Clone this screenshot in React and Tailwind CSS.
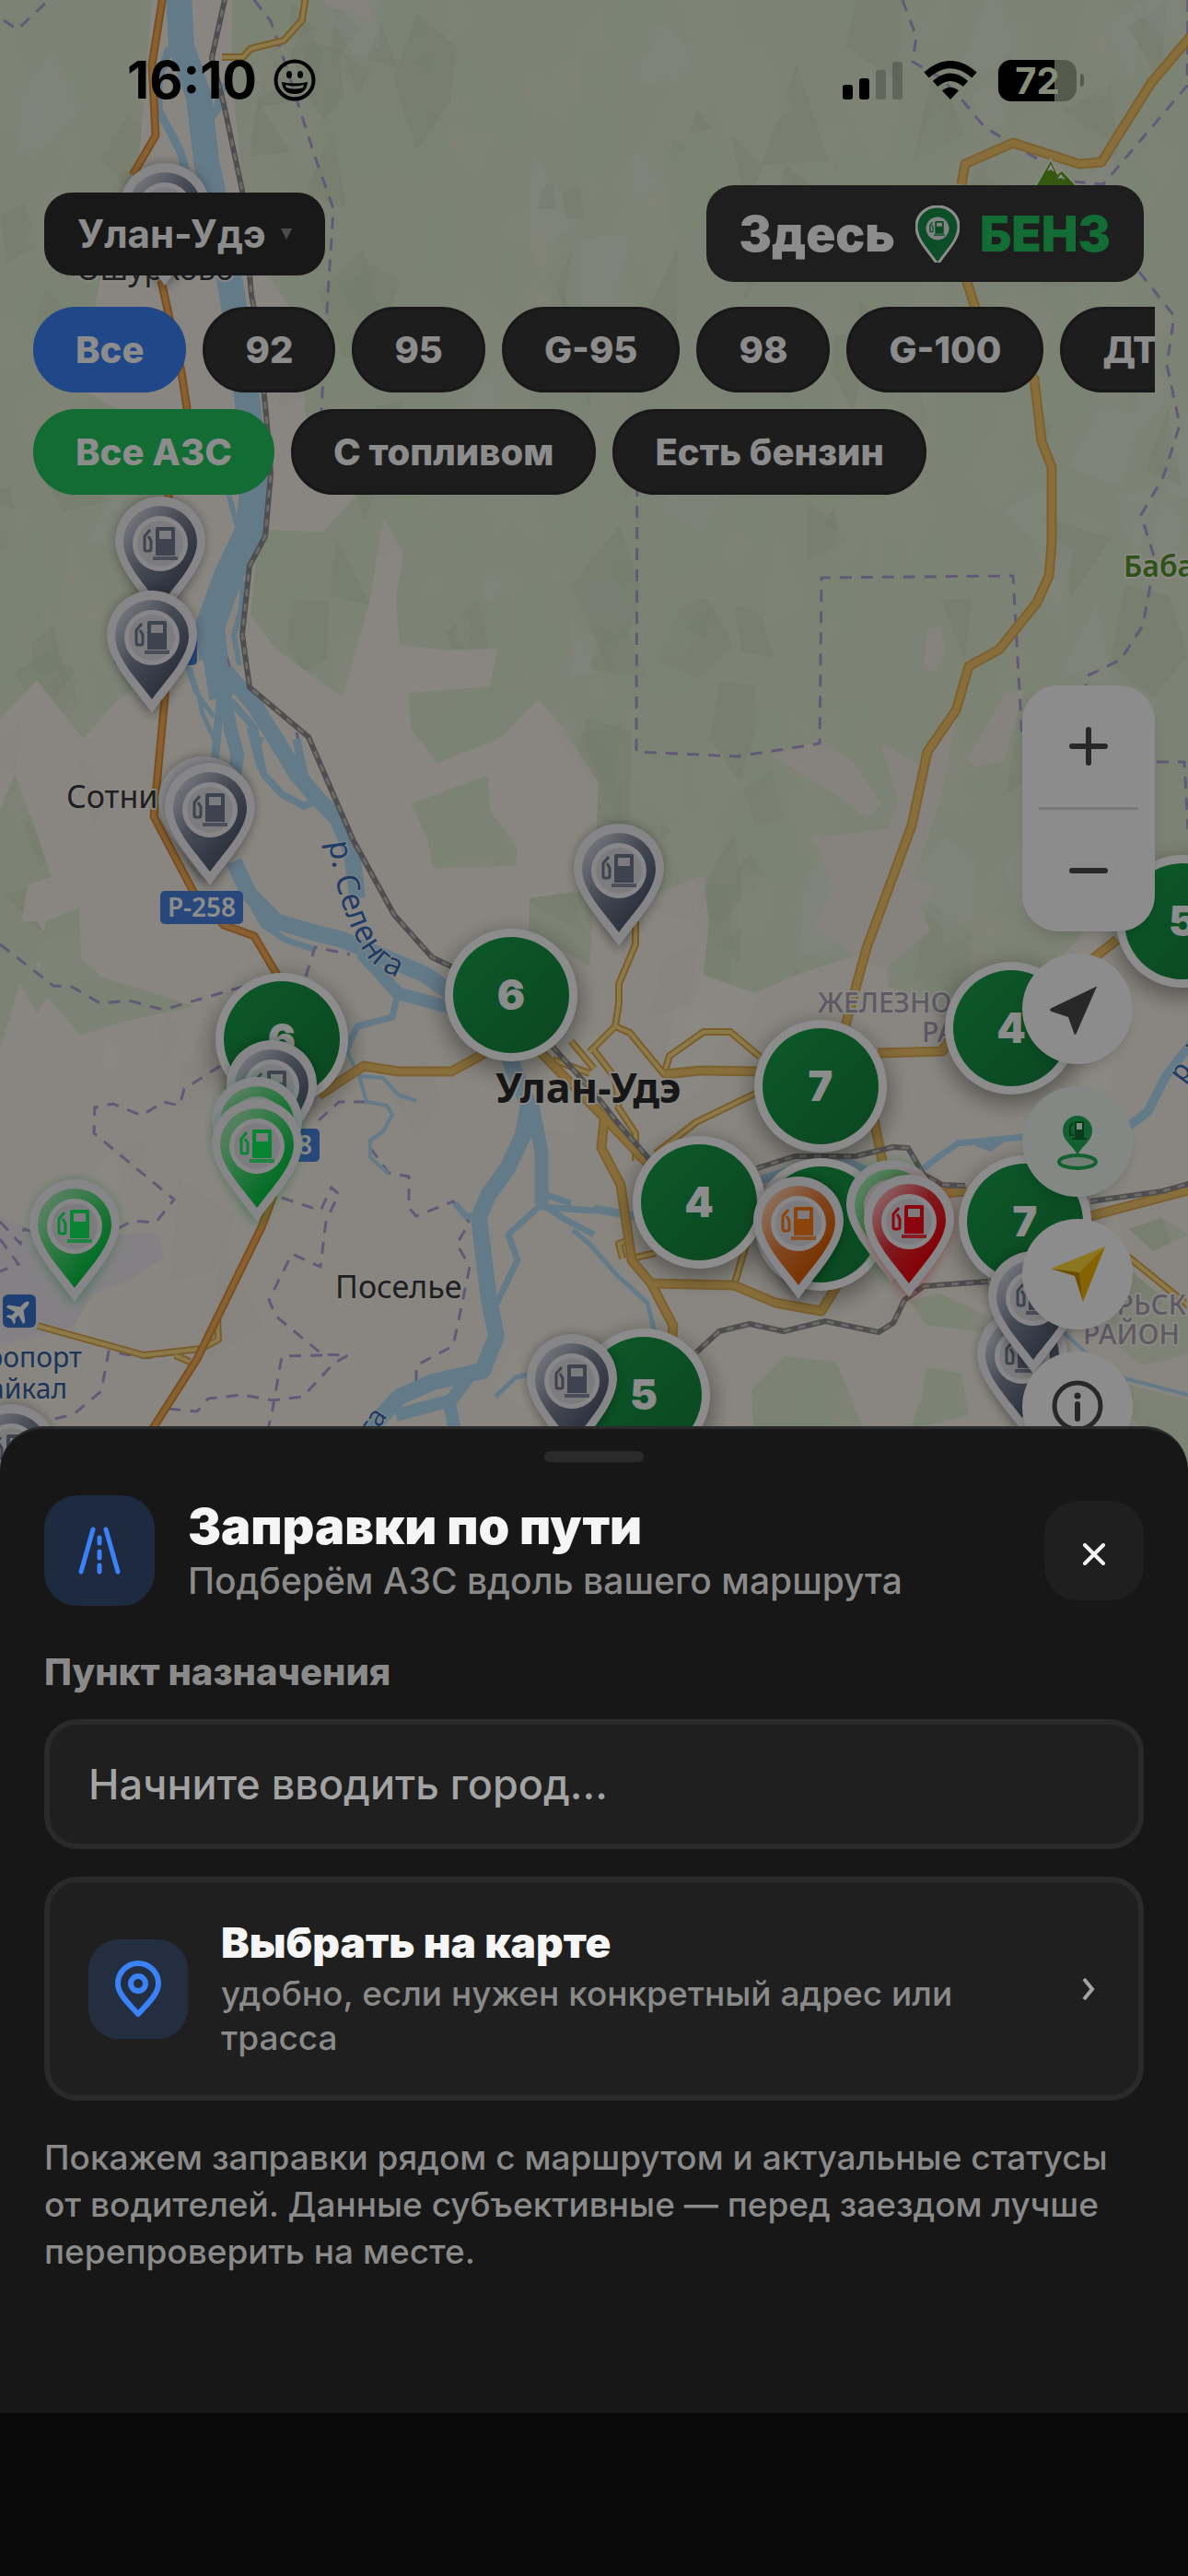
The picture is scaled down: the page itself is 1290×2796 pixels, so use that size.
import React, { useState } from 'react';

// seeded random, so the relief looks the same on every render
const makeRandom = (seed) => () => {
  seed = (seed * 16807) % 2147483647;
  return seed / 2147483647;
};

const makeFacets = (count, seed, minSize, maxSize) => {
  const rnd = makeRandom(seed);
  const facets = [];
  for (let i = 0; i < count; i++) {
    const cx = rnd() * 1290;
    const cy = rnd() * 1600;
    const size = minSize + rnd() * (maxSize - minSize);
    const corners = 3 + Math.floor(rnd() * 3);
    const start = rnd() * 6;
    const points = [];
    for (let j = 0; j < corners; j++) {
      const a = start + (j * 6.28) / corners;
      const r = size * (0.4 + rnd() * 0.8);
      points.push(`${Math.round(cx + Math.cos(a) * r * 0.6)},${Math.round(cy + Math.sin(a) * r)}`);
    }
    facets.push({ points: points.join(' '), tone: rnd() });
  }
  return facets;
};

const forestFacets = makeFacets(800, 4211, 18, 82);
const landFacets = makeFacets(90, 977, 25, 80);

const forests = [
  "0,0 165,0 158,90 150,180 118,262 84,420 176,470 176,540 150,620 158,738 120,768 90,802 40,738 0,780",
  "252,0 1290,0 1290,985 1262,1005 1180,1008 1128,1066 1110,1072 1080,1066 1050,1120 965,1070 958,1030 920,1040 870,1056 820,1078 764,1058 770,1000 764,950 700,975 645,960 650,850 612,790 584,760 545,800 475,828 446,792 444,752 532,745 540,704 480,706 434,700 430,650 438,600 416,560 402,650 372,757 300,705 272,668 282,575 350,577 385,540 378,480 334,470 322,345 292,300 262,190 252,80",
  "0,880 16,840 40,905 56,952 30,960 20,1025 58,1072 40,1100 0,1030",
  "50,1000 86,985 88,1040 110,1060 210,1092 130,1110 88,1124 40,1070",
  "446,872 530,842 532,880 562,920 560,940 470,942 464,910",
  "575,975 645,965 640,1048 608,1030 574,1016",
  "0,1000 40,1000 60,1030 24,1060 0,1140",
  "852,1472 908,1478 938,1552 818,1552 816,1508",
  "988,1412 1020,1404 1072,1428 1068,1446 1006,1438",
  "1006,1484 1044,1490 1052,1536 988,1552 1000,1520",
  "1226,1334 1262,1322 1290,1340 1252,1358",
  "1226,1378 1290,1430 1290,1470 1240,1482 1200,1450",
  "1180,1490 1290,1520 1290,1600 1230,1600 1240,1550",
];

const clearings = [
  "352,0 400,0 406,26 380,12 356,8",
  "1006,684 1020,680 1026,705 1016,728 1004,726",
  "838,820 890,805 925,825 956,872 942,888 904,860",
  "956,806 998,830 1008,820 1030,790 1040,772 1020,870 990,960 1010,1010 960,1052 930,1040 884,1004 912,950 880,908 930,904 964,900 976,870",
  "1092,752 1112,750 1090,826 1058,832 1050,824",
  "884,906 902,915 916,945 962,946 1015,960 1010,975 980,1000 920,1006",
  "310,395 332,430 300,445",
];

const riverParts = [
  { w: 28, d: "M194 -5 L197 50 L216 105 L224 175 L238 240 L252 320 L268 430 L278 520" },
  { w: 32, d: "M278 510 L272 575 L248 625 L228 680 L232 715" },
  { w: 26, d: "M232 705 L240 758" },
  { w: 9, d: "M184 52 L172 85 L172 120 L186 145 L196 165 L203 190" },
  { w: 9, d: "M242 90 L236 118 L222 138" },
  { w: 6, d: "M248 536 L258 572 M264 630 L262 660 L254 690 L260 722" },
  { w: 5, d: "M202 720 L212 750 L232 778 M206 725 L216 756 L220 775 L234 805" },
  { w: 9, d: "M240 750 L236 795 L233 828" },
  { w: 15, d: "M242 745 L250 790 L258 820 L254 842" },
  { w: 18, d: "M244 728 L276 765 L298 800 L322 840 L346 868 L366 888 L382 925 L388 975" },
  { w: 8, d: "M250 760 L276 790 L286 840 L306 862 L330 875 L344 868" },
  { w: 5, d: "M270 790 L282 835 M284 800 L278 820" },
  { w: 9, d: "M322 802 L332 850" },
  { w: 18, d: "M254 935 L270 970 L300 1000 L340 1012 L372 1020 L420 1040 L462 1058 L500 1085" },
  { w: 7, d: "M270 975 L286 1004 L310 1020 L340 1030" },
  { w: 14, d: "M392 1034 L432 1078 L490 1094" },
  { w: 7, d: "M432 1078 L426 1104 L388 1114 L376 1140" },
  { w: 4, d: "M376 1140 L390 1168 L398 1196 L420 1200 L426 1210 L416 1228 L402 1238 L402 1256 L422 1274 M392 1168 L416 1170 L432 1188 L452 1195" },
  { w: 18, d: "M552 1146 L574 1200 L568 1232 L551 1268 L531 1296 L520 1321 L526 1370 L531 1411 L539 1450 L524 1488 L470 1500 L434 1516 L400 1552" },
  { w: 15, d: "M578 1200 L588 1250 L588 1307" },
  { w: 7, d: "M588 1307 L552 1340 L562 1368 L539 1415 M588 1307 L616 1325 L645 1340" },
  { w: 7, d: "M588 1310 L645 1314 M590 1296 L620 1306 M494 1306 L506 1320 L520 1320" },
  { w: 14, d: "M512 1490 L490 1520 L430 1536 M488 1524 L494 1552" },
  { w: 5, d: "M538 1516 L560 1495 L590 1488 M622 1335 L640 1350 L670 1384 L703 1414 L711 1446" },
  { w: 10, d: "M1294 1132 L1266 1168 L1246 1207 L1226 1222" },
  { w: 7, d: "M1112 1234 L1040 1241 L1020 1255 L1003 1268 M1090 1236 L1075 1246 L1060 1241" },
  { w: 9, d: "M822 1282 L875 1264 L912 1257 L940 1270 M645 1312 L690 1320" },
  { w: 4, d: "M1155 1446 L1185 1474 L1221 1496 L1290 1514" },
];

const highways = "M177 -5 L165 70 L169 147 L144 190 M174 300 L197 404 L203 443 L183 536 L181 640 L179 757 L167 886 L210 968 L243 1004 L276 1016 L302 1060 L322 1150 L312 1200 L296 1300 L284 1332 L214 1475 L165 1552";

const mainRoads = "M1294 38 L1250 90 L1196 176 L1172 178 L1100 155 L1048 178 L1044 200 M1048 300 L1061 340 L1123 411 L1131 479 L1142 507 L1142 590 L1139 625 L1126 654 L1085 705 L1052 723 L1038 771 L1007 816 L990 896 L941 1029 L916 1120 M949 1215 L966 1300 L1050 1293 M953 1143 L1023 1141 L1035 1120 M1184 1320 L1294 1291 M346 1189 L395 1157 L432 1163 L490 1163 L527 1143 M721 1166 L760 1162 L830 1163 M585 1140 L657 1214 L715 1275 M657 1206 L653 1246 L674 1286 L686 1368 L707 1393 L797 1395 L842 1414 L892 1423 L912 1390 M707 1393 L731 1439 L728 1470 M1213 1020 L1185 1042";

const smallRoads = "M332 -5 L328 22 L308 44 L272 53 L264 62 L241 62 M690 1000 L690 1025 L672 1068 L672 1089 L668 1114 L640 1142 M668 1114 L684 1121 L721 1166 L727 1146 L764 1120 L793 1120 L825 1147 M822 1186 L756 1218 L712 1252 M645 1140 L668 1170 L672 1200 M620 1130 L645 1160 M600 1150 L640 1165 M670 1200 L690 1230 L690 1260 M797 1395 L812 1345 M686 1366 L712 1360 M686 1345 L672 1350 L676 1366 M41 1439 L156 1471 L218 1464 L237 1454 L236 1430 M190 1471 L206 1478 M1225 1364 L1294 1420 M645 1186 L625 1175";

const rails = "M245 -5 L230 63 L243 113 L263 207 L273 320 L280 357 L290 461 L294 514 L288 582 L271 614 L263 689 L271 746 L335 800 L383 911 L428 993 L469 1039 L492 1050 M600 1136 L645 1186 L670 1218 L710 1264 M822 1268 L863 1255 L929 1255 L970 1245 L986 1246 L1003 1275 L1023 1286 L1048 1287 M1184 1304 L1262 1293 L1294 1284 M1073 1391 L1003 1396 L982 1411 L970 1436 L954 1446 L896 1434 L851 1445 L814 1437 L781 1445 L756 1468";

const borders = "M4 22 L19 32 L53 0 M276 0 L294 23 L309 67 L341 167 L362 227 L356 320 L347 480 M980 0 L995 40 L991 67 L1019 83 L1040 103 L1069 138 L1134 177 M1290 0 L1289 93 L1198 200 L1163 197 M1237 295 L1275 343 L1267 396 L1281 461 L1263 518 L1239 559 L1254 607 L1241 679 L1217 716 L1180 734 L1178 760 M692 480 L691 816 L801 821 L890 807 L892 627 L1100 625 L1110 803 M1256 827 L1286 827 L1290 900 M263 630 L243 655 L239 690 L250 725 M322 795 L335 850 L358 880 M0 1025 L58 1070 L78 1071 L109 1089 L140 1086 L177 1096 L267 1070 M332 1060 L342 1028 L380 1036 M239 1157 L200 1182 L195 1200 L177 1196 L154 1211 L123 1198 L103 1202 L102 1230 L189 1302 L169 1327 L144 1325 L123 1336 M346 1216 L368 1196 L400 1196 M402 1246 L422 1273 L444 1277 L444 1311 L452 1320 L492 1304 L510 1327 L496 1350 L510 1375 L502 1414 L492 1461 L452 1482 L452 1500 M306 1300 L348 1314 L360 1289 L368 1296 L354 1325 L348 1375 L317 1361 L292 1411 L300 1429 L350 1470 L378 1471 L362 1480 L329 1516 L296 1520 L263 1514 L226 1518 L214 1532 L181 1529 M350 1471 L306 1472 L296 1530 L290 1555 M0 1326 L22 1350 L26 1334 L44 1340 M0 1345 L20 1372 L0 1380 M60 1540 L80 1535 L110 1510 L118 1467 L160 1474 L200 1468";

const pinColors = {
  gray: { from: '#d4d6e0', mid: '#7f869a', to: '#525b72', icon: '#737b92', glow: '#000000' },
  green: { from: '#a8ecb8', mid: '#52dc78', to: '#00c440', icon: '#10f25c', glow: '#00a83a' },
  orange: { from: '#ffd0ae', mid: '#ea8240', to: '#dc5c00', icon: '#ff7c18', glow: '#000000' },
  red: { from: '#ffb6b6', mid: '#e8303a', to: '#f00008', icon: '#ff0818', glow: '#d80010' },
};

const pins = [
  { x: 179, y: 309, color: 'gray' },
  { x: 174, y: 671, color: 'gray' },
  { x: 165, y: 773, color: 'gray' },
  { x: 221, y: 953, color: 'gray' },
  { x: 228, y: 960, color: 'gray' },
  { x: 672, y: 1026, color: 'gray' },
  { x: 295, y: 1261, color: 'gray' },
  { x: 279, y: 1301, color: 'green' },
  { x: 279, y: 1325, color: 'green' },
  { x: 81, y: 1412, color: 'green' },
  { x: 867, y: 1409, color: 'orange' },
  { x: 968, y: 1391, color: 'green' },
  { x: 987, y: 1407, color: 'red' },
  { x: 1110, y: 1553, color: 'gray' },
  { x: 1122, y: 1490, color: 'gray' },
  { x: 621, y: 1580, color: 'gray' },
  { x: 12, y: 1656, color: 'gray' },
];

const clusters = [
  { x: 555, y: 1080, count: 6 },
  { x: 306, y: 1128, count: 6 },
  { x: 891, y: 1179, count: 7 },
  { x: 891, y: 1329, count: 5 },
  { x: 759, y: 1305, count: 4 },
  { x: 1098, y: 1116, count: 4 },
  { x: 1113, y: 1326, count: 7 },
  { x: 699, y: 1514, count: 5 },
  { x: 1284, y: 1000, count: 5 },
];

const PumpShape = ({ color }) => (
  <g>
    <path fillRule="evenodd" fill={color} d="M-4 -18 h17 a2 2 0 0 1 2 2 v29 h-21 v-29 a2 2 0 0 1 2 -2 z M-2 -14 h13 v9 h-13 z" />
    <rect x="-9" y="14" width="27" height="4" fill={color} opacity="0.8" />
    <path d="M-12 -15 L-18 -8 V6 a2 2 0 0 0 2 2 h3 a2 2 0 0 0 2 -2 V-3 L-14 -8" fill="none" stroke={color} strokeWidth="3" />
  </g>
);

const Pin = ({ x, y, color }) => {
  const c = pinColors[color];
  return (
    <g transform={`translate(${x} ${y})`}>
      <path d="M0 4 C-18 -22 -46 -54 -46 -84 A46 46 0 0 1 46 -84 C46 -54 18 -22 0 4 Z" fill={c.glow} opacity="0.45" filter="url(#soft)" />
      <path d="M0 1 C-20 -27 -49 -56 -49 -84 A49 48 0 0 1 49 -84 C49 -56 20 -27 0 1 Z" fill="#f4f4f8" />
      <path d="M0 -14 C-18 -38 -40 -60 -40 -83 A40 39 0 0 1 40 -83 C40 -60 18 -38 0 -14 Z" fill={`url(#pin-${color})`} />
      <circle cx="0" cy="-81" r="30" fill="#f6f6f9" />
      <circle cx="0" cy="-81" r="25" fill="#e2e2e6" />
      <g transform="translate(1 -81)">
        <PumpShape color={c.icon} />
      </g>
    </g>
  );
};

const Cluster = ({ x, y, count }) => (
  <g>
    <circle cx={x} cy={y + 8} r="74" fill="#000" opacity="0.38" filter="url(#shade)" />
    <circle cx={x} cy={y} r="72" fill="#fff" />
    <circle cx={x} cy={y} r="63" fill="url(#cluster)" />
    <text x={x} y={y + 16} textAnchor="middle" fontSize="45" fontWeight="900" fill="#fff">{count}</text>
  </g>
);

const RoadBadge = ({ x, y }) => (
  <g>
    <rect x={x} y={y} width="90" height="36" rx="5" fill="#4a84e0" />
    <text x={x + 45} y={y + 28} textAnchor="middle" fontSize="28" fontWeight="600" fill="#fff">Р-258</text>
  </g>
);

const CityMap = () => (
  <svg viewBox="0 0 1290 1620" className="absolute inset-x-0 top-0 w-full" role="img" aria-label="Карта">
    <defs>
      <clipPath id="forest">
        {forests.map((p) => <polygon key={p} points={p} />)}
      </clipPath>
      <filter id="soft" x="-40%" y="-40%" width="180%" height="180%">
        <feGaussianBlur stdDeviation="7" />
      </filter>
      <filter id="shade" x="-40%" y="-40%" width="180%" height="180%">
        <feGaussianBlur stdDeviation="13" />
      </filter>
      <linearGradient id="cluster" x1="0" y1="0" x2="1" y2="1">
        <stop offset="0" stopColor="#16a34a" />
        <stop offset="1" stopColor="#15803d" />
      </linearGradient>
      {Object.keys(pinColors).map((name) => (
        <linearGradient key={name} id={`pin-${name}`} x1="0.1" y1="0.1" x2="0.75" y2="0.8">
          <stop offset="0" stopColor={pinColors[name].from} />
          <stop offset="0.5" stopColor={pinColors[name].mid} />
          <stop offset="1" stopColor={pinColors[name].to} />
        </linearGradient>
      ))}
      <path id="selenga-label" d="M357 914 C363 960 376 1004 397 1036 C409 1052 426 1063 470 1072" />
    </defs>

    <rect width="1290" height="1620" fill="#faf5eb" />
    {landFacets.map((f, i) => (
      <polygon key={i} points={f.points} fill={f.tone > 0.5 ? '#efeae0' : '#fefcf0'} opacity="0.4" />
    ))}
    {forests.map((p) => <polygon key={p} points={p} fill="#e4efd3" />)}
    <g clipPath="url(#forest)">
      {forestFacets.map((f, i) => (
        <polygon
          key={i}
          points={f.points}
          fill={f.tone > 0.78 ? '#d2dfc3' : f.tone > 0.42 ? '#deedd0' : f.tone > 0.08 ? '#e9f0d8' : '#eceee4'}
          opacity="0.5"
        />
      ))}
    </g>
    {clearings.map((p) => <polygon key={p} points={p} fill="#f5eee8" />)}
    <path d="M0 1320 L60 1345 L172 1337 L178 1365 L140 1390 L100 1405 L80 1440 L0 1460 Z" fill="#efecf0" />

    <path d={borders} fill="none" stroke="#b0a4d8" strokeWidth="3" strokeDasharray="13 10" />

    <g fill="none" stroke="#b5def8" strokeLinejoin="round">
      {riverParts.map((r) => <path key={r.d} d={r.d} strokeWidth={r.w} />)}
    </g>

    <g fill="none" strokeLinejoin="round">
      <path d={smallRoads} stroke="#dca94e" strokeWidth="8" />
      <path d={smallRoads} stroke="#ffdf88" strokeWidth="4" />
      <path d={mainRoads} stroke="#e4b058" strokeWidth="11" />
      <path d={mainRoads} stroke="#f6c86c" strokeWidth="7" />
      <path d={highways} stroke="#da8e3e" strokeWidth="9" />
      <path d={highways} stroke="#fab058" strokeWidth="5" />
      <path d={rails} stroke="#8f8f8f" strokeWidth="6" />
      <path d={rails} stroke="#c4c2bc" strokeWidth="3" strokeDasharray="8 8" />
    </g>

    <g stroke="#f4f8e6" strokeWidth="4" paintOrder="stroke" fill="#62a020">
      <path d="M1122 208 L1141 175 L1148 190 L1153 186 L1174 208 Z" />
    </g>
    <path d="M1137 186 L1141 178 L1145 187 L1141 184 Z M1148 194 L1152 189 L1157 195 L1152 193 Z" fill="#fff" />

    <g fontFamily="'Noto Sans', sans-serif" stroke="#fbf8f0" strokeWidth="4" paintOrder="stroke" strokeLinejoin="round">
      <text x="72" y="877" fontSize="34" fill="#3a3a3a">Сотни</text>
      <text x="83" y="304" fontSize="34" fill="#3a3a3a">Ошурково</text>
      <text x="364" y="1409" fontSize="34" fill="#3a3a3a">Поселье</text>
      <text x="538" y="1197" fontSize="45" fontWeight="700" fill="#2b2b2b">Улан-Удэ</text>
      <text x="1220" y="626" fontSize="32" fontWeight="600" fill="#57962a">Бабас</text>
      <text x="89" y="1484" textAnchor="end" fontSize="30" fill="#36609f">Аэропорт</text>
      <text x="73" y="1518" textAnchor="end" fontSize="30" fill="#36609f">Байкал</text>
      <text x="888" y="1099" fontSize="30" fontWeight="500" fill="#aba4b4">ЖЕЛЕЗНО</text>
      <text x="1001" y="1131" fontSize="30" fontWeight="500" fill="#aba4b4">РА</text>
      <text x="1311" y="1427" textAnchor="end" fontSize="30" fontWeight="500" fill="#aba4b4">ЯБРЬСКИ</text>
      <text x="1176" y="1459" fontSize="30" fontWeight="500" fill="#aba4b4">РАЙОН</text>
      <g fill="#3a6dbc" strokeWidth="2">
        <text fontSize="34"><textPath href="#selenga-label">р. Селенга</textPath></text>
        <text fontSize="30" transform="translate(1284 1176) rotate(-54)">р. Уда</text>
        <text fontSize="30" transform="translate(384 1590) rotate(-55)">енга</text>
      </g>
    </g>

    <g fontFamily="'Noto Sans', sans-serif">
      <RoadBadge x={174} y={967} />
      <RoadBadge x={257} y={1225} />
      <RoadBadge x={124} y={686} />
    </g>

    <g>
      <rect x="3" y="1405" width="36" height="36" rx="6" fill="#3a72d0" />
      <path transform="translate(21 1423) rotate(45) scale(1.3)" fill="#fff" d="M0 -11 C1.6 -11 2 -8 2 -6 L2 -3 L10 3 V5.500 L2 3 V7 L4.500 9 V11 L0 9.500 L-4.500 11 V9 L-2 7 V3 L-10 5.500 V3 L-2 -3 V-6 C-2 -8 -1.600 -11 0 -11 Z" />
    </g>

    <g fontFamily="Inter, sans-serif">
      {clusters.map((c) => <Cluster key={`${c.x}-${c.y}`} {...c} />)}
    </g>
    {pins.map((p) => <Pin key={`${p.x}-${p.y}`} {...p} />)}
  </svg>
);

const StatusBar = () => (
  <div className="absolute inset-x-0 top-0 flex items-center justify-between pt-[57px] pl-[138px] pr-[113px] text-black">
    <div className="flex items-center gap-[18px]">
      <span className="text-[56px] leading-[60px] font-bold">16:10</span>
      <svg viewBox="0 0 46 46" className="w-[46px] h-[46px]" aria-hidden="true">
        <circle cx="23" cy="23" r="20.500" fill="none" stroke="#000" strokeWidth="4" />
        <ellipse cx="17" cy="17" rx="3" ry="4" />
        <ellipse cx="29" cy="17" rx="3" ry="4" />
        <path fillRule="evenodd" d="M9 25 Q23 28 37 25 Q36 38 23 38 Q10 38 9 25 Z M13 28 Q23 31 33 28 L32 31 Q23 34 14 31 Z" />
      </svg>
    </div>
    <div className="flex items-center gap-[23px]">
      <svg viewBox="0 0 65 42" className="w-[65px] h-[42px]" aria-hidden="true">
        <rect x="0" y="26" width="11" height="16" rx="3" />
        <rect x="18" y="19" width="11" height="23" rx="3" />
        <rect x="36" y="10" width="11" height="32" rx="3" opacity="0.22" />
        <rect x="54" y="1" width="11" height="41" rx="3" opacity="0.22" />
      </svg>
      <svg viewBox="0 0 58 42" className="w-[58px] h-[42px]" aria-hidden="true">
        <path d="M29 42 L20 32.500 Q29 25 38 32.500 Z" />
        <path d="M12.500 25 Q29 10.500 45.500 25" fill="none" stroke="#000" strokeWidth="8" />
        <path d="M3 15.500 Q29 -7.500 55 15.500" fill="none" stroke="#000" strokeWidth="8" />
      </svg>
      <div className="flex items-center gap-1">
        <div className="flex h-[45px] w-[85px] items-center justify-center rounded-[14px] bg-[linear-gradient(90deg,#000_72%,#545b4c_72%)] text-[40px] leading-[45px] font-bold text-[#858d79]">
          72
        </div>
        <div className="h-[14px] w-[4px] rounded-r-full bg-[#545b4c]" />
      </div>
    </div>
  </div>
);

const fuels = ['Все', '92', '95', 'G-95', '98', 'G-100', 'ДТ/ДТ+'];
const statuses = ['Все АЗС', 'С топливом', 'Есть бензин'];

const Chip = ({ active, activeClass, onClick, children }) => (
  <button
    type="button"
    onClick={onClick}
    className={`h-[93px] shrink-0 rounded-full border-[3px] px-[43px] text-[40px] leading-[48px] font-extrabold text-white ${active ? activeClass : 'border-[#2c2c2c] bg-[#363636]'}`}
  >
    {children}
  </button>
);

const RoundButton = ({ label, className = 'bg-white', children }) => (
  <button
    type="button"
    aria-label={label}
    className={`flex h-[120px] w-[120px] items-center justify-center rounded-full shadow-lg ${className}`}
  >
    {children}
  </button>
);

const Logo = () => (
  <div className="flex h-[105px] items-center gap-[22px] rounded-[30px] bg-[#363835] px-9">
    <span className="text-[53px] leading-[60px] font-black text-white">Здесь</span>
    <svg viewBox="0 0 48 62" className="h-[62px] w-[48px]" aria-hidden="true">
      <path d="M24 64 C15 50 1 38 1 23 A23 22 0 0 1 47 23 C47 38 33 50 24 64 Z" fill="#178f47" stroke="#fff" strokeWidth="3" />
      <circle cx="24" cy="25" r="12.500" fill="#eee" />
      <g transform="translate(24 25) scale(0.45)">
        <PumpShape color="#158a43" />
      </g>
    </svg>
    <span className="text-[53px] leading-[60px] font-black text-[#22c55e]">БЕНЗ</span>
  </div>
);

const MapControls = () => (
  <div className="mt-[207px] mr-9 flex w-[144px] flex-col gap-6 self-end">
    <div className="flex h-[267px] flex-col rounded-[39px] bg-white px-[18px] shadow-lg">
      <button type="button" aria-label="Приблизить" className="flex flex-1 items-center justify-center border-b-[3px] border-[#dcdcdc]">
        <svg viewBox="0 0 42 42" className="h-[42px] w-[42px]" stroke="#4a4a4a" strokeWidth="6" strokeLinecap="round">
          <path d="M21 3 V39 M3 21 H39" />
        </svg>
      </button>
      <button type="button" aria-label="Отдалить" className="flex flex-1 items-center justify-center">
        <svg viewBox="0 0 42 42" className="h-[42px] w-[42px]" stroke="#4a4a4a" strokeWidth="6" strokeLinecap="round">
          <path d="M3 21 H39" />
        </svg>
      </button>
    </div>
    <RoundButton label="Моё местоположение">
      <svg viewBox="0 0 120 120" className="h-[120px] w-[120px]">
        <path d="M80 38 L59 86 Q57 90 56 86 L50 69 L32 63 Q28 61 32 59 L78 37 Q83 34 80 38 Z" fill="#4a4a4a" />
      </svg>
    </RoundButton>
    <RoundButton label="Ближайшая заправка" className="bg-[#eef8f2]">
      <svg viewBox="0 0 120 120" className="h-[120px] w-[120px]">
        <ellipse cx="60" cy="82" rx="20" ry="7" fill="#cfe6d6" stroke="#22b058" strokeWidth="4" />
        <path d="M60 75 C56 65 44 60 44 48 A16 16 0 0 1 76 48 C76 60 64 65 60 75 Z" fill="#22b058" />
        <rect x="57" y="38" width="10" height="18" fill="#0d6a30" />
        <rect x="59" y="40" width="6" height="7" fill="#eafaf0" />
        <path d="M55 40 L52 44 V53 H56 M54 57 H70" fill="none" stroke="#0d6a30" strokeWidth="2" />
      </svg>
    </RoundButton>
    <RoundButton label="Заправки по пути">
      <svg viewBox="0 0 120 120" className="h-[120px] w-[120px]">
        <path d="M90 30 L31 54 L62 58 Z" fill="#ffd83a" />
        <path d="M90 30 L62 58 L66 90 Z" fill="#f0b400" />
        <path d="M31 54 L57 62 L66 90 L62 58 Z" fill="#c98a00" />
      </svg>
    </RoundButton>
    <RoundButton label="Информация">
      <svg viewBox="0 0 120 120" className="h-[120px] w-[120px]" fill="none" stroke="#4a4a4a" strokeLinecap="round">
        <circle cx="60" cy="59" r="25" strokeWidth="5" />
        <path d="M60 57 V73" strokeWidth="6" />
        <circle cx="60" cy="48" r="3.500" fill="#4a4a4a" stroke="none" />
      </svg>
    </RoundButton>
  </div>
);

const RouteSheet = () => {
  const [city, setCity] = useState('');

  return (
    <section
      role="dialog"
      aria-labelledby="route-title"
      className="absolute inset-x-0 bottom-[177px] flex flex-col rounded-t-[48px] border-t-[3px] border-[#2a2a2a] bg-[#171717] px-12 pt-6 pb-[150px]"
    >
      <div className="h-3 w-[108px] self-center rounded-full bg-[#2a2a2a]" />

      <header className="mt-9 flex items-center gap-9">
        <div className="flex h-[120px] w-[120px] shrink-0 items-center justify-center rounded-[36px] bg-[#1e2a40]">
          <svg viewBox="0 0 46 52" className="h-[52px] w-[46px]" fill="none" stroke="#3b82f6" strokeWidth="5" strokeLinecap="round">
            <path d="M16 3 L3 49 M30 3 L43 49 M23 12 V18 M23 27 V34 M23 42 V49" />
          </svg>
        </div>
        <div className="flex flex-1 flex-col gap-[5px]">
          <h1 id="route-title" className="text-[54px] leading-[60px] font-black text-[#f5f5f5]">Заправки по пути</h1>
          <p className="text-[39px] leading-[48px] font-medium text-[#8a8a8a]">Подберём АЗС вдоль вашего маршрута</p>
        </div>
        <button
          type="button"
          aria-label="Закрыть"
          className="flex h-[108px] w-[108px] shrink-0 items-center justify-center rounded-[36px] bg-[#1f1f1f]"
        >
          <svg viewBox="0 0 24 24" className="mt-2 h-6 w-6" stroke="#f5f5f5" strokeWidth="4" strokeLinecap="round">
            <path d="M2 2 L22 22 M22 2 L2 22" />
          </svg>
        </button>
      </header>

      <label htmlFor="city" className="mt-12 text-[40px] leading-[48px] font-extrabold text-[#8a8a8a]">Пункт назначения</label>
      <input
        id="city"
        type="text"
        value={city}
        onChange={(e) => setCity(e.target.value)}
        placeholder="Начните вводить город..."
        className="mt-[27px] h-[141px] rounded-[36px] border-[6px] border-[#2a2a2a] bg-[#1f1f1f] px-[42px] text-[45px] font-medium text-white outline-none placeholder:text-[#a3a3a3]"
      />

      <button
        type="button"
        className="mt-[30px] flex items-center gap-9 rounded-[36px] border-[6px] border-[#2a2a2a] bg-[#1f1f1f] px-[42px] py-[38px] text-left"
      >
        <span className="flex h-[108px] w-[108px] shrink-0 items-center justify-center rounded-[33px] bg-[#232e40]">
          <svg viewBox="0 0 50 62" className="h-[62px] w-[50px]" fill="none" stroke="#3b82f6" strokeWidth="6">
            <path d="M25 58 C14 46 3 36 3 25 A22 22 0 0 1 47 25 C47 36 36 46 25 58 Z" strokeLinejoin="round" />
            <circle cx="25" cy="25" r="8" />
          </svg>
        </span>
        <span className="flex flex-1 flex-col gap-[5px]">
          <span className="text-[46px] leading-[54px] font-black text-[#f5f5f5]">Выбрать на карте</span>
          <span className="text-[37px] leading-[48px] font-medium text-[#8a8a8a]">удобно, если нужен конкретный адрес или трасса</span>
        </span>
        <svg viewBox="0 0 20 24" className="h-6 w-5" fill="none" stroke="#a3a3a3" strokeWidth="4">
          <path d="M3 1 L12 12 L3 23" />
        </svg>
      </button>

      <p className="mt-9 text-[37px] leading-[51px] font-medium text-[#8a8a8a]">
        Покажем заправки рядом с маршрутом и актуальные статусы от водителей. Данные субъективные — перед заездом лучше перепроверить на месте.
      </p>
    </section>
  );
};

const App = () => {
  const [fuel, setFuel] = useState('Все');
  const [status, setStatus] = useState('Все АЗС');

  return (
    <main className="relative flex min-h-screen flex-col overflow-hidden bg-[#111111] font-['Inter',sans-serif]">
      <CityMap />

      <div className="relative flex flex-col pt-[201px]">
        <div className="flex items-center justify-between px-12">
          <button type="button" className="flex h-[90px] items-center gap-4 rounded-[30px] bg-[#2b2c2a] px-9 text-[42px] leading-[48px] font-bold text-white">
            Улан-Удэ
            <svg viewBox="0 0 12 12" className="h-3 w-3" fill="#8a8a8a">
              <path d="M0 0 H12 L6 12 Z" />
            </svg>
          </button>
          <Logo />
        </div>

        <div className="mx-9 mt-[27px] flex gap-[18px] overflow-hidden">
          {fuels.map((f) => (
            <Chip key={f} active={f === fuel} activeClass="border-[#3b82f6] bg-[#3b82f6]" onClick={() => setFuel(f)}>{f}</Chip>
          ))}
        </div>
        <div className="mx-9 mt-[18px] flex gap-[18px] overflow-hidden">
          {statuses.map((s) => (
            <Chip key={s} active={s === status} activeClass="border-[#22c55e] bg-[#22c55e]" onClick={() => setStatus(s)}>{s}</Chip>
          ))}
        </div>

        <MapControls />
      </div>

      {/* dims the map while the sheet is open */}
      <div className="absolute inset-0 bg-black/45" />

      <StatusBar />
      <RouteSheet />
    </main>
  );
};

export default App;
